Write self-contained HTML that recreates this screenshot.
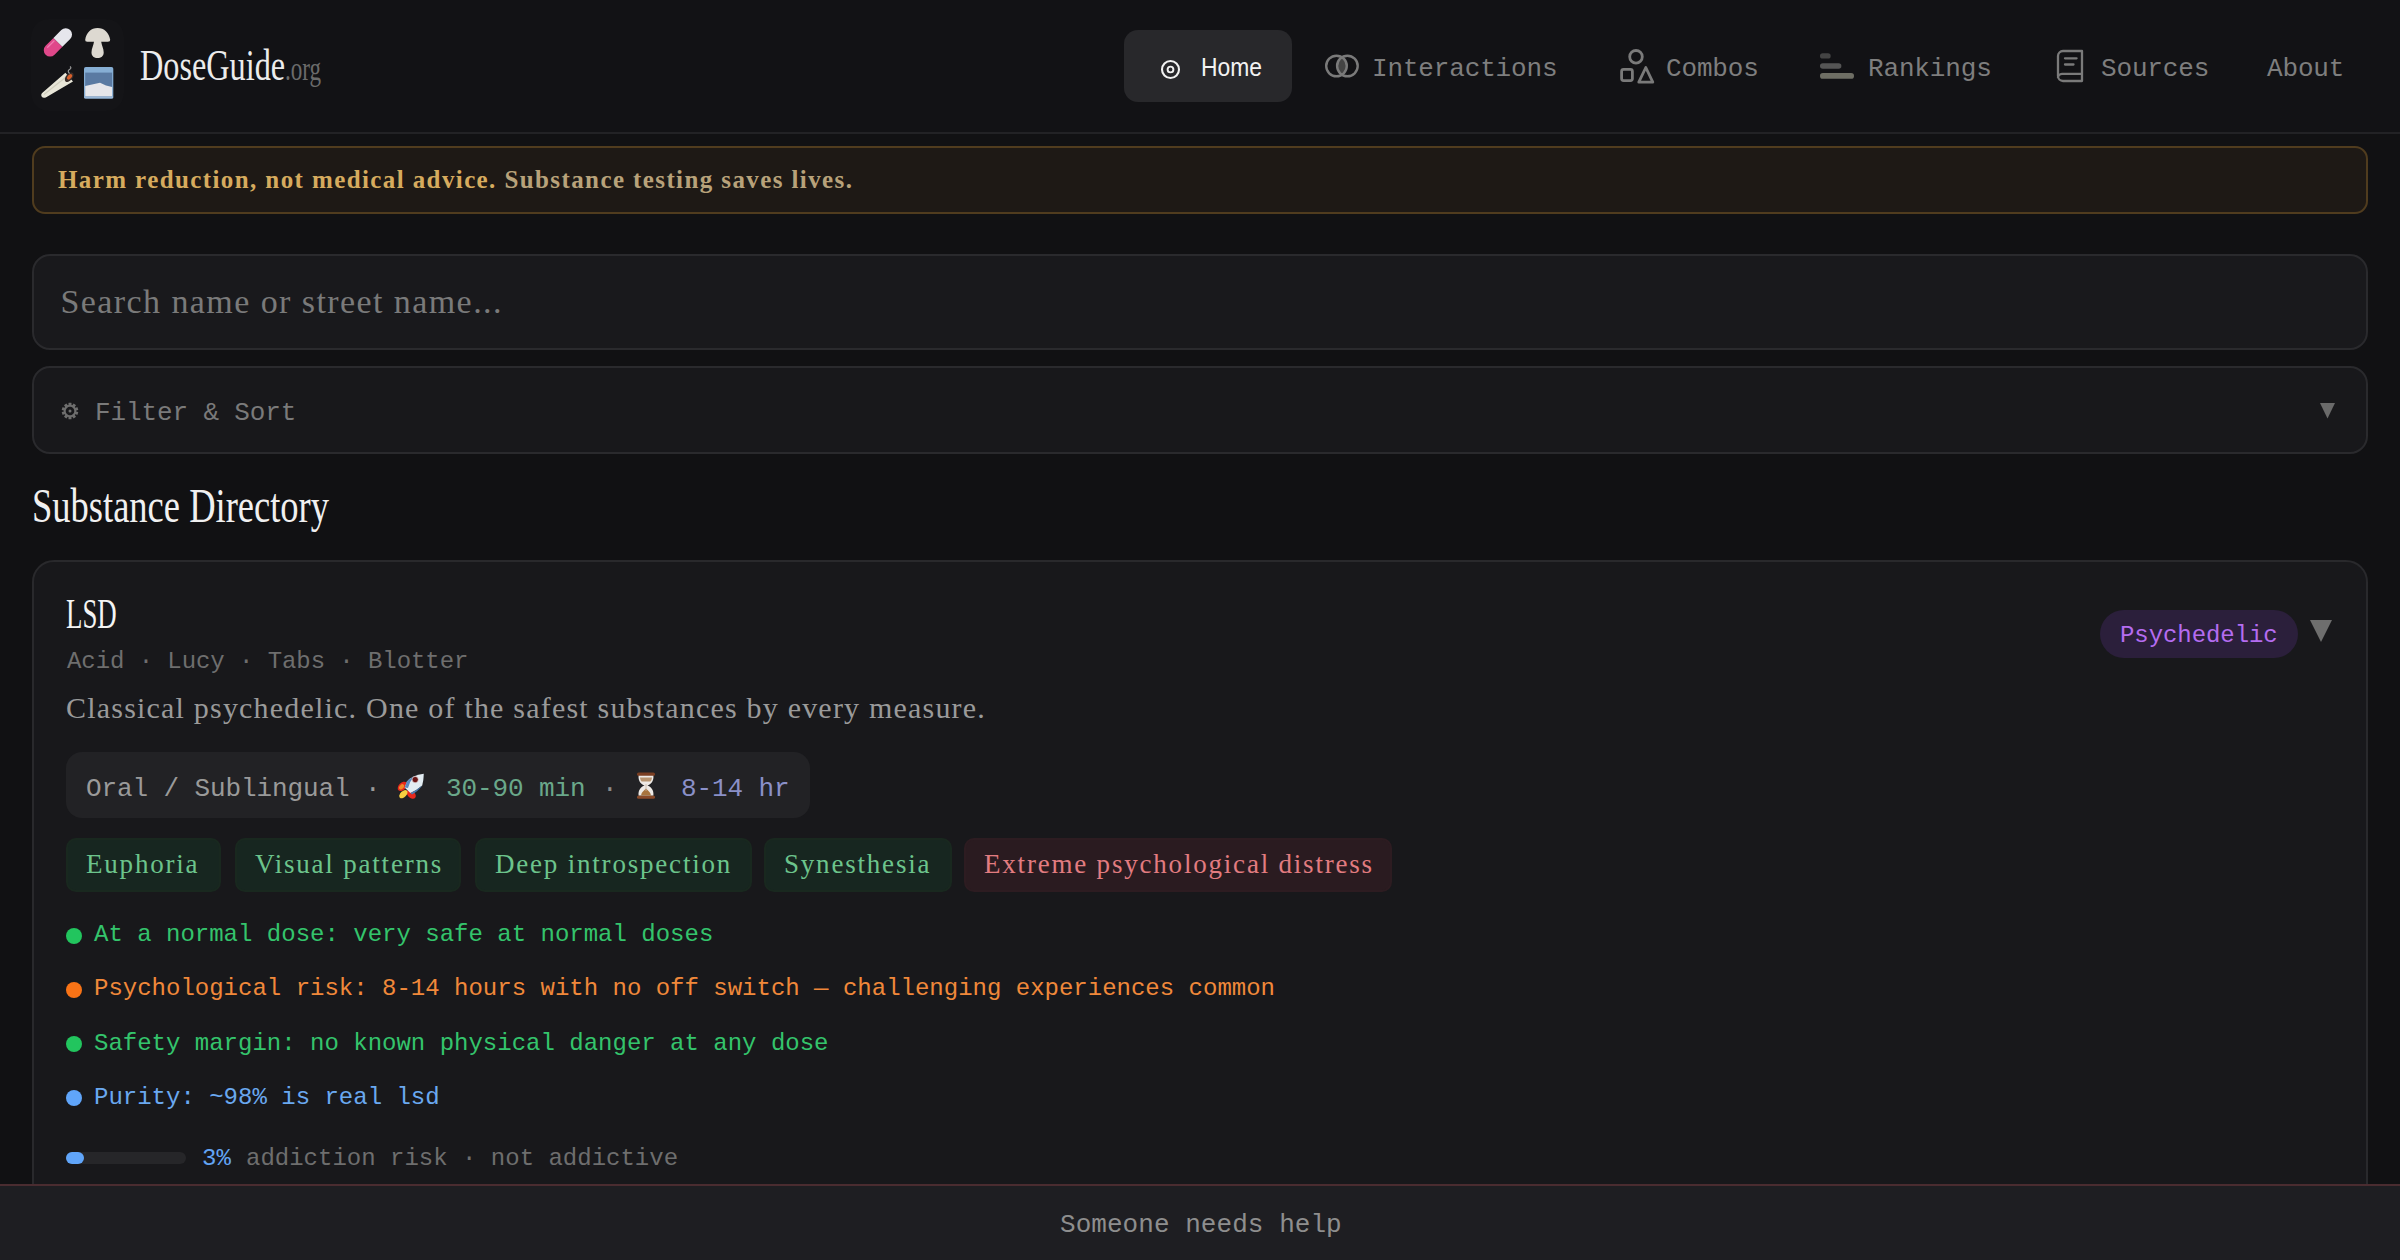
<!DOCTYPE html>
<html><head><meta charset="utf-8"><style>
html,body{margin:0;padding:0;width:2400px;height:1260px;overflow:hidden;background:#111113;}
.t{position:absolute;white-space:pre;line-height:1;}
.b{position:absolute;}
</style></head><body>
<div class="b" style="left:0px;top:0px;width:2400px;height:132px;background:#121215;border-radius:0px;"></div>
<div class="b" style="left:0px;top:132px;width:2400px;height:2px;background:#222225;border-radius:0px;"></div>
<div class="b" style="left:31px;top:19px;width:93px;height:92px;background:#141417;border-radius:18px;"></div>
<svg class="b" style="left:0;top:0" width="130" height="120" viewBox="0 0 130 120">
<g transform="translate(57.9 42.4) scale(0.9) translate(-57.9 -42.4) rotate(-45 57.9 42.4)">
<path d="M57.9 35.4 H45.6 A7 7 0 0 0 45.6 49.4 H57.9 Z" fill="#e0488a"/>
<path d="M57.9 35.4 H70.2 A7 7 0 0 1 70.2 49.4 H57.9 Z" fill="#e6e6ec"/>
<path d="M46 38.2 H56" stroke="#f07ab0" stroke-width="1.4" stroke-linecap="round"/>
</g>
<path d="M85.2 39.8 C86.2 32.6 91 27.9 97.6 27.9 C104.2 27.9 109 32.6 110.2 39.8 Q110.4 41.7 107.9 41.7 L101.2 41.7 C101.6 45 103.7 48.5 103.7 52.4 C103.7 56 101 58 97.6 58 C94.2 58 91.5 56 91.5 52.4 C91.5 48.5 93.6 45 94 41.7 L87.3 41.7 Q84.9 41.7 85.2 39.8 Z" fill="#ddd9d1"/>
<path d="M41.6 96.4 Q40.4 94 43 92.2 L65.4 72.8 L73 81.6 L45.8 97.4 Q43 98.6 41.6 96.4Z" fill="#e8e6d8"/>
<path d="M44 94.5 L66 77" stroke="#d0cebe" stroke-width="1.2"/>
<ellipse cx="69.2" cy="77.2" rx="5.6" ry="3.2" transform="rotate(-49 69.2 77.2)" fill="#3a2e2a"/>
<ellipse cx="69.6" cy="76.8" rx="3.2" ry="1.9" transform="rotate(-49 69.6 76.8)" fill="#d8602c"/>
<path d="M69.5 73.5 Q67 71 69.5 69.5 Q72 68 70 66.5" fill="none" stroke="#9a9a9a" stroke-width="1.2"/>
<rect x="84" y="67" width="29.3" height="31.6" rx="1.8" fill="#86aed4"/>
<rect x="85.2" y="72.6" width="26.9" height="24.8" fill="#5a7aa2"/>
<path d="M85.2 96.6 V86 L92 84.5 L100 82.8 L106 85.5 L112.1 87 V96.6 Z" fill="#e6e6ea"/>
<rect x="84" y="96.4" width="29.3" height="2.2" rx="1" fill="#9ab8d8"/>
</svg>
<div class="t" style="left:140px;top:44.35px;font-family:'Liberation Serif', serif;font-size:44px;color:#ececec;letter-spacing:0px;font-weight:400;transform:scaleX(0.733);transform-origin:0 0;">DoseGuide</div>
<div class="t" style="left:285px;top:51.53px;font-family:'Liberation Serif', serif;font-size:34px;color:#6b6b6b;letter-spacing:0px;font-weight:400;transform:scaleX(0.68);transform-origin:0 0;">.org</div>
<div class="b" style="left:1124px;top:30px;width:168px;height:72px;background:#28282b;border-radius:14px;"></div>
<svg class="b" style="left:1150px;top:40px" width="950" height="50" viewBox="1150 40 950 50">
<circle cx="1170.5" cy="69.5" r="8.5" fill="none" stroke="#f2f2f2" stroke-width="2.1"/><circle cx="1170.5" cy="69.5" r="2.9" fill="none" stroke="#f2f2f2" stroke-width="1.9"/>
<path d="M1341.95 57.4 A10.3 10.3 0 0 1 1341.95 74.6 A10.3 10.3 0 0 1 1341.95 57.4Z" fill="#444"/>
<circle cx="1336.5" cy="66" r="10.3" fill="none" stroke="#7a7a7a" stroke-width="2.4"/><circle cx="1347.4" cy="66" r="10.3" fill="none" stroke="#7a7a7a" stroke-width="2.4"/>
<circle cx="1636" cy="56.8" r="6.3" fill="none" stroke="#7a7a7a" stroke-width="2.8"/>
<rect x="1621.6" y="69.4" width="10.8" height="11.2" rx="2" fill="none" stroke="#7a7a7a" stroke-width="2.8"/>
<path d="M1645.8 67.5 L1652.8 82.2 L1638.8 82.2 Z" fill="none" stroke="#7a7a7a" stroke-width="2.8" stroke-linejoin="round"/>
<rect x="1820" y="53.3" width="10.7" height="5.3" rx="2.65" fill="#444"/>
<rect x="1820" y="63.3" width="21.4" height="5.5" rx="2.75" fill="#555"/>
<rect x="1820" y="73.1" width="34" height="5.7" rx="2.85" fill="#6e6e64"/>
<path d="M2082 51 H2063 A5 5 0 0 0 2058 56 V76 A5 5 0 0 0 2063 81 H2082 Z M2058 78 A4 4 0 0 1 2062 73.8 H2082" fill="none" stroke="#7a7a7a" stroke-width="2.3" stroke-linejoin="round"/>
<path d="M2065 58.3 H2076.6 M2065 64.5 H2073.5" stroke="#7a7a7a" stroke-width="2.3" stroke-linecap="round"/>
</svg>
<div class="t" style="left:1201px;top:54.19px;font-family:'Liberation Sans', sans-serif;font-size:26px;color:#f2f2f2;letter-spacing:0px;font-weight:400;transform:scaleX(0.88);transform-origin:0 0;">Home</div>
<div class="t" style="left:1372px;top:55.98px;font-family:'Liberation Mono', monospace;font-size:26px;color:#7e7e7e;letter-spacing:-0.15px;font-weight:400;">Interactions</div>
<div class="t" style="left:1666px;top:55.98px;font-family:'Liberation Mono', monospace;font-size:26px;color:#7e7e7e;letter-spacing:-0.15px;font-weight:400;">Combos</div>
<div class="t" style="left:1868px;top:55.98px;font-family:'Liberation Mono', monospace;font-size:26px;color:#7e7e7e;letter-spacing:-0.15px;font-weight:400;">Rankings</div>
<div class="t" style="left:2101px;top:55.98px;font-family:'Liberation Mono', monospace;font-size:26px;color:#7e7e7e;letter-spacing:-0.15px;font-weight:400;">Sources</div>
<div class="t" style="left:2267px;top:55.98px;font-family:'Liberation Mono', monospace;font-size:26px;color:#7e7e7e;letter-spacing:-0.15px;font-weight:400;">About</div>
<div class="b" style="left:32px;top:146px;width:2336px;height:68px;background:#1e1915;border-radius:13px;border:2px solid #503c1e;box-sizing:border-box;"></div>
<div class="t" style="left:58px;top:167.16px;font-family:'Liberation Serif', serif;font-size:25px;color:#d6ab5e;letter-spacing:1.4px;font-weight:700;"><b>Harm reduction, not medical advice.</b> <span style="color:#b8a27a">Substance testing saves lives.</span></div>
<div class="b" style="left:32px;top:254px;width:2336px;height:96px;background:#19191c;border-radius:18px;border:2px solid #2a2a2d;box-sizing:border-box;"></div>
<div class="t" style="left:60.5px;top:285.28px;font-family:'Liberation Serif', serif;font-size:34px;color:#7a7a7a;letter-spacing:1.42px;font-weight:400;">Search name or street name...</div>
<div class="b" style="left:32px;top:366px;width:2336px;height:88px;background:#18181b;border-radius:18px;border:2px solid #2a2a2d;box-sizing:border-box;"></div>
<div class="t" style="left:95px;top:400.08px;font-family:'Liberation Mono', monospace;font-size:26px;color:#7a7a7a;letter-spacing:-0.12px;font-weight:400;">Filter &amp; Sort</div>
<svg class="b" style="left:60.4px;top:401.3px" width="20" height="20" viewBox="-10 -10 20 20">
<g fill="#6e6e6e"><rect x="-1.5" y="-8.3" width="3" height="3.4" rx="0.4" transform="rotate(0)"/><rect x="-1.5" y="-8.3" width="3" height="3.4" rx="0.4" transform="rotate(36)"/><rect x="-1.5" y="-8.3" width="3" height="3.4" rx="0.4" transform="rotate(72)"/><rect x="-1.5" y="-8.3" width="3" height="3.4" rx="0.4" transform="rotate(108)"/><rect x="-1.5" y="-8.3" width="3" height="3.4" rx="0.4" transform="rotate(144)"/><rect x="-1.5" y="-8.3" width="3" height="3.4" rx="0.4" transform="rotate(180)"/><rect x="-1.5" y="-8.3" width="3" height="3.4" rx="0.4" transform="rotate(216)"/><rect x="-1.5" y="-8.3" width="3" height="3.4" rx="0.4" transform="rotate(252)"/><rect x="-1.5" y="-8.3" width="3" height="3.4" rx="0.4" transform="rotate(288)"/><rect x="-1.5" y="-8.3" width="3" height="3.4" rx="0.4" transform="rotate(324)"/><circle r="6.2"/></g>
<circle r="4.3" fill="#18181b"/><circle r="1.5" fill="#6e6e6e"/>
</svg>
<svg class="b" style="left:2320px;top:403px" width="15" height="15.5" viewBox="0 0 15 15.5"><path d="M0 0H15L7.5 15.5Z" fill="#6a6a6a"/></svg>
<div class="t" style="left:32px;top:480.87px;font-family:'Liberation Serif', serif;font-size:49px;color:#f0f0f0;letter-spacing:0px;font-weight:400;transform:scaleX(0.745);transform-origin:0 0;">Substance Directory</div>
<div class="b" style="left:32px;top:560px;width:2336px;height:700px;background:#18181b;border-radius:22px;border:2px solid #29292c;box-sizing:border-box;"></div>
<div class="t" style="left:66px;top:592.19px;font-family:'Liberation Serif', serif;font-size:43px;color:#f4f4f4;letter-spacing:0px;font-weight:400;transform:scaleX(0.625);transform-origin:0 0;">LSD</div>
<div class="t" style="left:67px;top:649.61px;font-family:'Liberation Mono', monospace;font-size:24px;color:#6e6e6e;letter-spacing:-0.07px;font-weight:400;">Acid · Lucy · Tabs · Blotter</div>
<div class="t" style="left:66px;top:692.88px;font-family:'Liberation Serif', serif;font-size:30px;color:#9a9a9a;letter-spacing:1.2px;font-weight:400;">Classical psychedelic. One of the safest substances by every measure.</div>
<div class="b" style="left:2100px;top:610px;width:198px;height:48px;background:#2b1f3b;border-radius:24px;"></div>
<div class="t" style="left:2120px;top:623.61px;font-family:'Liberation Mono', monospace;font-size:24px;color:#b46cf0;letter-spacing:-0.07px;font-weight:400;">Psychedelic</div>
<svg class="b" style="left:2310px;top:620px" width="22" height="22" viewBox="0 0 22 22"><path d="M0 0H22L11 22Z" fill="#6e6e6e"/></svg>
<div class="b" style="left:66px;top:752px;width:744px;height:66px;background:#222225;border-radius:16px;"></div>
<div class="t" style="left:86px;top:775.88px;font-family:'Liberation Mono', monospace;font-size:26px;color:#9a9a9a;letter-spacing:-0.1px;font-weight:400;">Oral / Sublingual ·</div>
<svg class="b" style="left:390px;top:766px" width="280" height="40" viewBox="390 766 280 40">
<ellipse cx="402.4" cy="786.4" rx="5.6" ry="3.6" transform="rotate(-45 402.4 786.4)" fill="#e8281c"/>
<ellipse cx="401.6" cy="786.8" rx="3" ry="2" transform="rotate(-45 401.6 786.8)" fill="#f08a2a"/>
<ellipse cx="411.2" cy="794.2" rx="3.6" ry="5.4" transform="rotate(-45 411.2 794.2)" fill="#e8281c"/>
<ellipse cx="403.4" cy="794.2" rx="5" ry="3" transform="rotate(-45 403.4 794.2)" fill="#f6d040"/>
<path d="M423.8 773.8 Q412 775.4 407 781.6 L404.6 787.4 L410.4 793 Q416.6 790.6 422.2 785.6 Q423.6 781 423.8 773.8Z" fill="#e2ecf2"/>
<path d="M404.6 787.4 L407 781.6 Q409.6 778.4 414 776.6 Q409.6 781.6 408 788Z" fill="#5a8ac0"/>
<path d="M410.4 793 Q416.6 790.6 422.2 785.6 Q418 791.6 412 794.4Z" fill="#4a7ab0"/>
<circle cx="415.2" cy="779.6" r="2.9" fill="#6a1414"/><circle cx="415.2" cy="779.6" r="3.1" fill="none" stroke="#d0b0b0" stroke-width="0.7"/>

<rect x="637" y="772.5" width="18" height="3.4" rx="1.6" fill="#7a3e22"/><rect x="637" y="795.4" width="18" height="3.4" rx="1.6" fill="#8a4a28"/>
<path d="M638.6 775.8 H653.4 C654 781 651 784.4 647.4 785.6 C651 786.8 654 790.4 653.4 795.5 H638.6 C638 790.4 641 786.8 644.6 785.6 C641 784.4 638 781 638.6 775.8Z" fill="#eeeae6"/>
<path d="M640 777.6 H652 C651.8 779.6 651.2 780.8 650.4 781.6 H641.6 C640.8 780.8 640.2 779.6 640 777.6Z" fill="#b89470"/>
<path d="M641 795.4 C641.6 792 644 790.6 646 788.6 C648 790.6 650.4 792 651 795.4Z" fill="#a8743e"/>
<path d="M646 784 V791" stroke="#c8b8a8" stroke-width="0.8"/>
</svg>
<div class="t" style="left:446px;top:775.88px;font-family:'Liberation Mono', monospace;font-size:26px;color:#6aa88a;letter-spacing:-0.1px;font-weight:400;">30-90 min</div>
<div class="t" style="left:602px;top:775.88px;font-family:'Liberation Mono', monospace;font-size:26px;color:#8a8a8a;letter-spacing:-0.1px;font-weight:400;">·</div>
<div class="t" style="left:681px;top:775.88px;font-family:'Liberation Mono', monospace;font-size:26px;color:#8a90c8;letter-spacing:-0.1px;font-weight:400;">8-14 hr</div>
<div class="b" style="left:66px;top:838px;width:155px;height:54px;background:#172620;border-radius:10px;border:2px solid #19281f;box-sizing:border-box;"></div>
<div class="t" style="left:86px;top:851.39px;font-family:'Liberation Serif', serif;font-size:27px;color:#6cc48c;letter-spacing:1.8px;font-weight:400;">Euphoria</div>
<div class="b" style="left:235px;top:838px;width:226px;height:54px;background:#172620;border-radius:10px;border:2px solid #19281f;box-sizing:border-box;"></div>
<div class="t" style="left:255px;top:851.39px;font-family:'Liberation Serif', serif;font-size:27px;color:#6cc48c;letter-spacing:1.8px;font-weight:400;">Visual patterns</div>
<div class="b" style="left:475px;top:838px;width:277px;height:54px;background:#172620;border-radius:10px;border:2px solid #19281f;box-sizing:border-box;"></div>
<div class="t" style="left:495px;top:851.39px;font-family:'Liberation Serif', serif;font-size:27px;color:#6cc48c;letter-spacing:1.8px;font-weight:400;">Deep introspection</div>
<div class="b" style="left:764px;top:838px;width:188px;height:54px;background:#172620;border-radius:10px;border:2px solid #19281f;box-sizing:border-box;"></div>
<div class="t" style="left:784px;top:851.39px;font-family:'Liberation Serif', serif;font-size:27px;color:#6cc48c;letter-spacing:1.8px;font-weight:400;">Synesthesia</div>
<div class="b" style="left:964px;top:838px;width:428px;height:54px;background:#2a1b20;border-radius:10px;border:2px solid #2d1c21;box-sizing:border-box;"></div>
<div class="t" style="left:984px;top:851.39px;font-family:'Liberation Serif', serif;font-size:27px;color:#e27c80;letter-spacing:1.8px;font-weight:400;">Extreme psychological distress</div>
<div class="b" style="left:66px;top:927.7px;width:16px;height:16px;background:#22c55e;border-radius:8px;"></div>
<div class="t" style="left:94px;top:923.31px;font-family:'Liberation Mono', monospace;font-size:24px;color:#34c46c;letter-spacing:0px;font-weight:400;">At a normal dose: very safe at normal doses</div>
<div class="b" style="left:66px;top:981.8px;width:16px;height:16px;background:#f97316;border-radius:8px;"></div>
<div class="t" style="left:94px;top:977.41px;font-family:'Liberation Mono', monospace;font-size:24px;color:#f0883a;letter-spacing:0px;font-weight:400;">Psychological risk: 8-14 hours with no off switch — challenging experiences common</div>
<div class="b" style="left:66px;top:1036px;width:16px;height:16px;background:#22c55e;border-radius:8px;"></div>
<div class="t" style="left:94px;top:1031.61px;font-family:'Liberation Mono', monospace;font-size:24px;color:#34c46c;letter-spacing:0px;font-weight:400;">Safety margin: no known physical danger at any dose</div>
<div class="b" style="left:66px;top:1090.2px;width:16px;height:16px;background:#60a5fa;border-radius:8px;"></div>
<div class="t" style="left:94px;top:1085.81px;font-family:'Liberation Mono', monospace;font-size:24px;color:#6aa8f0;letter-spacing:0px;font-weight:400;">Purity: ~98% is real lsd</div>
<div class="b" style="left:66px;top:1152px;width:120px;height:12px;background:#262629;border-radius:6px;"></div>
<div class="b" style="left:66px;top:1152px;width:18px;height:12px;background:#60a5fa;border-radius:6px;"></div>
<div class="t" style="left:202px;top:1147.21px;font-family:'Liberation Mono', monospace;font-size:24px;color:#62a4f4;letter-spacing:0px;font-weight:400;">3%</div>
<div class="t" style="left:246px;top:1147.21px;font-family:'Liberation Mono', monospace;font-size:24px;color:#6e6e6e;letter-spacing:0px;font-weight:400;">addiction risk · not addictive</div>
<div class="b" style="left:0px;top:1184px;width:2400px;height:2px;background:#4a2c30;border-radius:0px;"></div>
<div class="b" style="left:0px;top:1186px;width:2400px;height:74px;background:#1e1e22;border-radius:0px;"></div>
<div class="t" style="left:1060px;top:1212.08px;font-family:'Liberation Mono', monospace;font-size:26px;color:#8e8e8e;letter-spacing:0.05px;font-weight:400;">Someone needs help</div>
</body></html>
